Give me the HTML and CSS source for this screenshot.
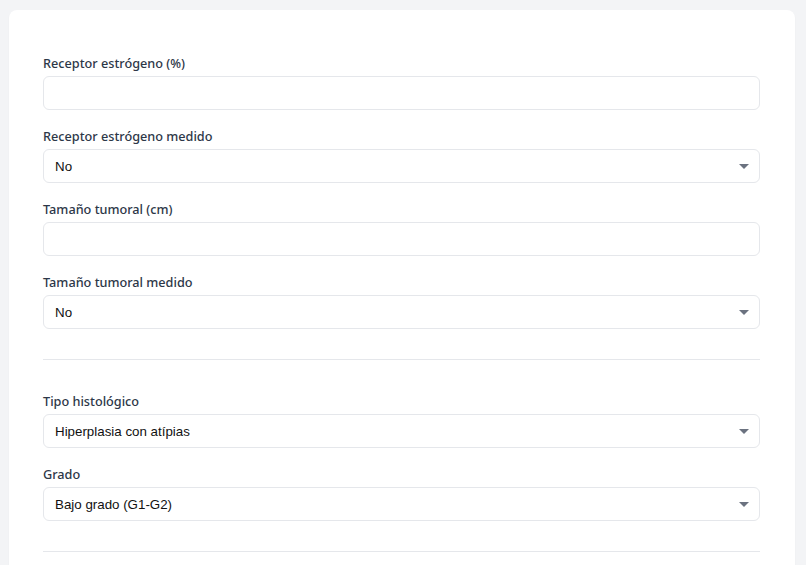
FILE: index.html
```html
<!DOCTYPE html>
<html lang="es">
<head>
<meta charset="utf-8">
<title>Formulario</title>
<link rel="stylesheet" href="styles.css">
</head>
<body>
<div class="card">
  <section class="section first">
    <div class="field">
      <label class="label">Receptor estrógeno (%)</label>
      <div class="control"></div>
    </div>
    <div class="field">
      <label class="label">Receptor estrógeno medido</label>
      <div class="control select"><span class="value">No</span><span class="caret"></span></div>
    </div>
    <div class="field">
      <label class="label">Tamaño tumoral (cm)</label>
      <div class="control"></div>
    </div>
    <div class="field">
      <label class="label">Tamaño tumoral medido</label>
      <div class="control select"><span class="value">No</span><span class="caret"></span></div>
    </div>
  </section>
  <section class="section">
    <div class="field">
      <label class="label">Tipo histológico</label>
      <div class="control select"><span class="value">Hiperplasia con atípias</span><span class="caret"></span></div>
    </div>
    <div class="field">
      <label class="label">Grado</label>
      <div class="control select"><span class="value">Bajo grado (G1-G2)</span><span class="caret"></span></div>
    </div>
  </section>
  <section class="section"></section>
</div>
</body>
</html>
```

FILE: styles.css
```css
html, body {
  margin: 0;
  padding: 0;
  background: #f3f4f6;
  height: 100%;
  overflow: hidden;
}
body {
  padding: 10px 11px 0 9px;
  box-sizing: border-box;
}
.card {
  background: #ffffff;
  border-radius: 8px;
  padding: 12px 35px 0 34px;
  box-shadow: 0 1px 2px rgba(0,0,0,0.04);
  min-height: 600px;
}
.section {
  padding: 31px 0 30px;
  border-bottom: 1px solid #e5e7eb;
}
.field {
  display: flex;
  flex-direction: column;
  gap: 3px;
  margin-bottom: 16px;
}
.field:last-child {
  margin-bottom: 0;
}
.label {
  font-family: "Noto Sans", "Open Sans", sans-serif;
  font-size: 12.7px;
  font-weight: 500;
  line-height: 20px;
  color: #2d3748;
}
.control {
  height: 34px;
  box-sizing: border-box;
  border: 1px solid #e5e7eb;
  border-radius: 6px;
  background: #fff;
  display: flex;
  align-items: center;
  justify-content: space-between;
  padding: 0 10px 0 11px;
}
.value {
  font-family: "Liberation Sans", Arial, sans-serif;
  font-size: 13.333px;
  color: #111111;
}
.caret {
  width: 0;
  height: 0;
  border-left: 5.5px solid transparent;
  border-right: 5.5px solid transparent;
  border-top: 5.5px solid #6b7280;
}
```
